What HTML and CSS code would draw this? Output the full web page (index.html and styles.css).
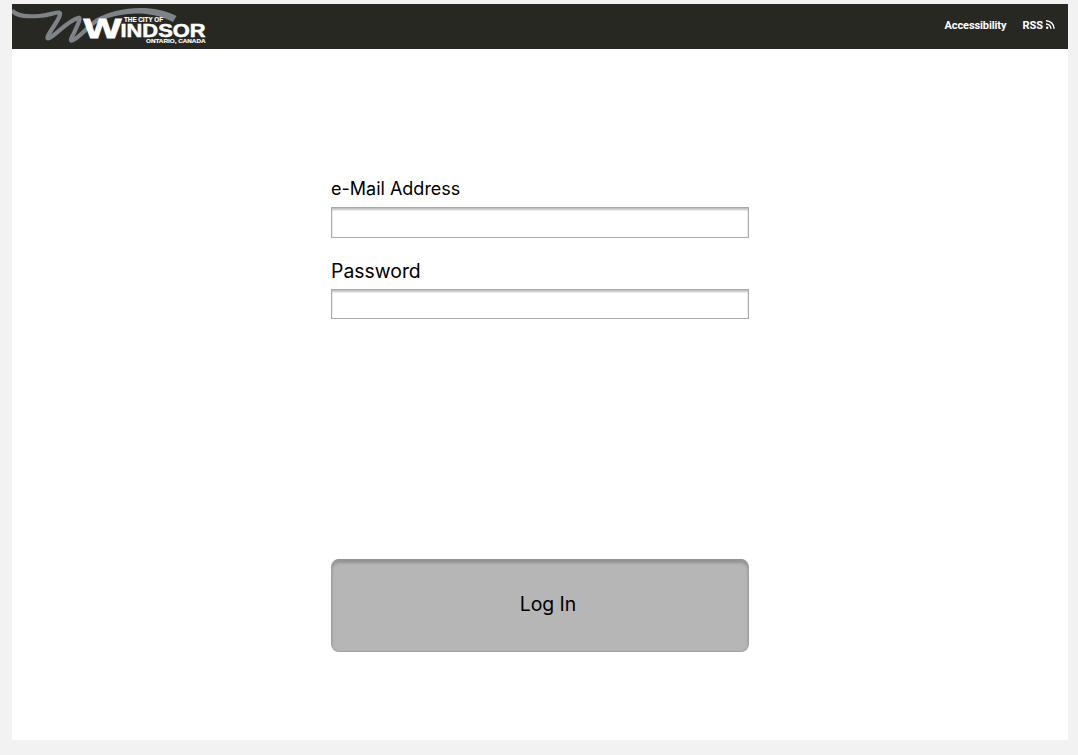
FILE: index.html
```html
<!DOCTYPE html>
<html lang="en">
<head>
<meta charset="utf-8">
<title>City of Windsor – Log In</title>
<link rel="stylesheet" href="styles.css">
</head>
<body>
<div class="page">
  <header class="topbar">
    <svg class="logo" width="200" height="45" viewBox="12 4 200 45" role="img" aria-label="The City of Windsor">
      <path class="wave" d="M12 10.500C18 17 29 16.500 39 16C48 15.500 54 12.500 59 12.500C62 13 58 20 54 26C50 32 46 38 48 38.500C55 37 66 21 79 17.700C81 18.500 77 26 74 33C71 38 70 41 72 40.500C82 36 88 25 98 20"/>
      <path class="arc" d="M95 19C116 7 152 3 176.500 16L173 22C149 9 118 12 97 22.500Z"/>
      <text class="logo-w" x="83.500" y="37.800" textLength="38" lengthAdjust="spacingAndGlyphs">W</text>
      <text class="logo-name" x="120.500" y="36.500" textLength="85" lengthAdjust="spacingAndGlyphs">INDSOR</text>
      <text class="logo-small" x="124" y="22.200" textLength="39" lengthAdjust="spacingAndGlyphs">THE CITY OF</text>
      <text class="logo-small logo-place" x="146" y="42.900" textLength="59.500" lengthAdjust="spacingAndGlyphs">ONTARIO, CANADA</text>
    </svg>
    <nav class="links">
      <a class="link accessibility">Accessibility</a>
      <a class="link rss">RSS
        <svg class="rss-icon" width="11" height="11" viewBox="0 0 11 11">
          <circle cx="2.200" cy="8.700" r="1.200"/>
          <path d="M1 4.900A4.900 4.900 0 0 1 5.900 9.800M1 1.700A8.100 8.100 0 0 1 9.100 9.800"/>
        </svg>
      </a>
    </nav>
  </header>
  <form class="login">
    <label class="label email-label" for="email">e-Mail Address</label>
    <input class="field email" id="email" type="email">
    <label class="label password-label" for="password">Password</label>
    <input class="field password" id="password" type="password">
    <button class="submit" type="button">Log In</button>
  </form>
</div>
</body>
</html>
```
FILE: styles.css
```css
* { box-sizing: border-box; }

body {
  margin: 0;
  padding: 4px 10px 15px 12px;
  background: #f2f2f2;
  color: #000;
  font-family: Inter, "Liberation Sans", sans-serif;
}

.page {
  height: 736px;
  background: #fff;
}

.topbar {
  display: flex;
  justify-content: space-between;
  height: 45px;
  padding-right: 12px;
  background: #272822;
}

.logo { display: block; }

.wave {
  fill: none;
  stroke: #7d8388;
  stroke-width: 4.2;
  stroke-linejoin: round;
}

.arc { fill: #7d8388; }

.logo text {
  fill: #fff;
  stroke: #fff;
  font-family: "Liberation Sans", sans-serif;
  font-weight: 700;
}

.logo .logo-w { font-size: 28px; stroke-width: .8px; }
.logo .logo-name { font-size: 18px; stroke-width: .5px; }
.logo .logo-small { font-size: 6.3px; stroke-width: .15px; }
.logo .logo-place { font-size: 5.8px; }

.links {
  display: flex;
  gap: 16px;
  padding-top: 15px;
}

.link {
  height: 13px;
  color: #fff;
  font: 700 11px/13px Roboto, "Liberation Sans", sans-serif;
}

.accessibility { letter-spacing: -.1px; }

.rss {
  display: flex;
  gap: 2px;
}

.rss-icon {
  fill: none;
  stroke: #fff;
  stroke-width: 1.5;
}

.rss-icon circle { fill: #fff; stroke: none; }

.login {
  display: flex;
  flex-direction: column;
  width: 418px;
  margin-left: 319px;
  padding-top: 128px;
}

.label {
  height: 24px;
  line-height: 24px;
}

.email-label { margin-bottom: 6px; font-size: 18px; }
.password-label { margin: 21px 0 6px; font-size: 19.4px; }

.field {
  width: 100%;
  height: 31px;
  padding: 4px 8px;
  border: 1px solid #aaa;
  border-radius: 0;
  background: #fff;
  box-shadow: inset 0 2px 2px rgba(0, 0, 0, .25);
  font: 16px Inter, sans-serif;
}

.password { height: 30px; }

.submit {
  height: 93px;
  margin-top: 240px;
  padding: 0 0 3px 16px;
  border: 1px solid #a0a0a0;
  border-top-color: #929292;
  border-radius: 8px;
  background: #b6b6b6;
  box-shadow: inset 0 3px 3px rgba(0, 0, 0, .2);
  color: #000;
  font: 19.4px Inter, sans-serif;
}
```
